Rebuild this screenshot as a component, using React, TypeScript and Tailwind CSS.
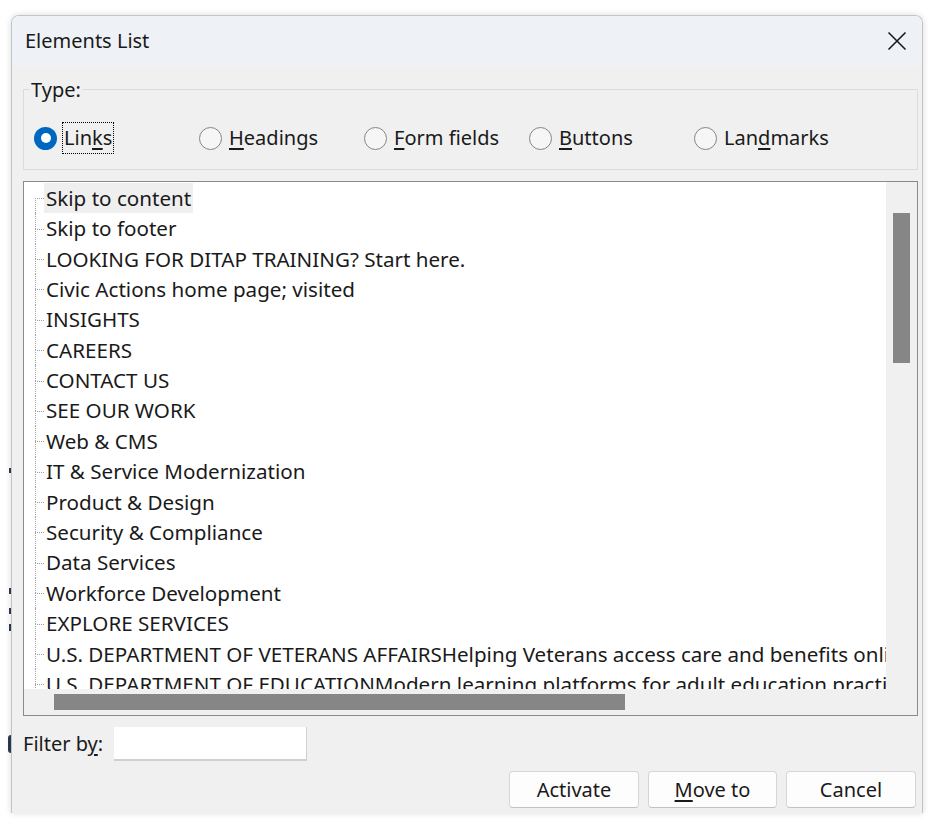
import React from 'react';

const items = [
  'Skip to content',
  'Skip to footer',
  'LOOKING FOR DITAP TRAINING? Start here.',
  'Civic Actions home page; visited',
  'INSIGHTS',
  'CAREERS',
  'CONTACT US',
  'SEE OUR WORK',
  'Web & CMS',
  'IT & Service Modernization',
  'Product & Design',
  'Security & Compliance',
  'Data Services',
  'Workforce Development',
  'EXPLORE SERVICES',
  'U.S. DEPARTMENT OF VETERANS AFFAIRSHelping Veterans access care and benefits online',
  'U.S. DEPARTMENT OF EDUCATIONModern learning platforms for adult education practitioners',
];

const Radio = ({
  checked,
  focused,
  children,
}: {
  checked?: boolean;
  focused?: boolean;
  children: React.ReactNode;
}) => {
  return (
    <div className="flex items-center h-full">
      {checked ? (
        <div className="w-[23px] h-[23px] rounded-full bg-[#0067c0] flex items-center justify-center">
          <div className="w-[10px] h-[10px] rounded-full bg-white" />
        </div>
      ) : (
        <div className="w-[23px] h-[23px] rounded-full border border-[#858585] bg-[#f6f6f6]" />
      )}
      <div
        className={
          focused
            ? 'ml-[5px] h-full px-[1px] flex items-center border border-dotted border-black'
            : 'ml-[5px] h-full px-[1px] flex items-center border border-transparent'
        }
      >
        {children}
      </div>
    </div>
  );
};

const Row = ({ text, index }: { text: string; index: number }) => {
  return (
    <div className="flex h-[30.4px] flex-none items-stretch">
      <div className="ml-[11px] w-[9px] flex flex-col flex-none">
        <div
          className={
            index === 0
              ? 'h-1/2'
              : 'h-1/2 border-l border-dotted border-[#a0a0a0]'
          }
        />
        <div className="h-1/2 border-l border-t border-dotted border-[#a0a0a0]" />
      </div>
      <div
        className={
          index === 0
            ? 'px-[2px] bg-[#efefef] whitespace-nowrap flex items-center'
            : 'px-[2px] whitespace-nowrap flex items-center'
        }
      >
        {text}
      </div>
    </div>
  );
};

const App = () => {
  return (
    <div
      className="w-[938px] h-[824px] bg-white flex text-[#1a1a1a] text-[20px]"
      style={{ fontFamily: '"Noto Sans", "Open Sans", sans-serif' }}
    >
      {/* bits of the page behind the dialog */}
      <div className="w-[11px] flex flex-col items-end flex-none">
        <div className="mt-[468px] w-[2px] h-[5px] bg-[#2b3a55]" />
        <div className="mt-[115px] w-[2px] h-[6px] bg-[#2b3a55]" />
        <div className="mt-[14px] w-[2px] h-[6px] bg-[#2b3a55]" />
        <div className="mt-[10px] w-[2px] h-[7px] bg-[#2b3a55]" />
        <div className="mt-[104px] w-[3px] h-[18px] rounded-l-full bg-[#2b3a55]" />
      </div>

      <div className="mt-[15px] w-[912px] h-[798px] flex flex-col border-l border-t border-r border-[#c4c4c4] rounded-t-[8px] overflow-hidden shadow-[0_0_6px_rgba(0,0,0,0.15)]">
        {/* title bar */}
        <div className="h-[50px] bg-[#eef2f7] flex items-center justify-between pl-[13px] pr-[15px] flex-none">
          <span className="text-[20px]">Elements List</span>
          <svg width="20" height="20" viewBox="0 0 20 20" fill="none">
            <path d="M1.5 1.5 L18.5 18.5 M18.5 1.5 L1.5 18.5" stroke="#1a1a1a" strokeWidth="1.6" />
          </svg>
        </div>

        {/* body */}
        <div className="flex-1 bg-[#f0f0f0] pl-[11px] pr-[4px] flex flex-col">
          {/* type group */}
          <div className="mt-[23px] h-[81px] border border-[#dcdcdc] flex flex-col flex-none">
            <div className="-mt-[13px] ml-[6px] px-[1px] w-fit bg-[#f0f0f0] leading-[26px]">
              Type:
            </div>
            <div className="mt-[19px] h-[30px] pl-[10px] grid grid-cols-[165px_165px_165px_165px_165px]">
              <Radio checked focused>
                <span>
                  Lin<u className="underline-offset-[3px]">k</u>s
                </span>
              </Radio>
              <Radio>
                <span>
                  <u className="underline-offset-[3px]">H</u>eadings
                </span>
              </Radio>
              <Radio>
                <span>
                  <u className="underline-offset-[3px]">F</u>orm fields
                </span>
              </Radio>
              <Radio>
                <span>
                  <u className="underline-offset-[3px]">B</u>uttons
                </span>
              </Radio>
              <Radio>
                <span>
                  Lan<u className="underline-offset-[3px]">d</u>marks
                </span>
              </Radio>
            </div>
          </div>

          {/* list */}
          <div className="mt-[11px] h-[535px] border border-[#8a8a8a] bg-[#f0f0f0] flex flex-col flex-none">
            <div className="flex h-[507px]">
              <div className="w-[862px] bg-white overflow-hidden pt-[1px] flex flex-col text-[20.6px]">
                {items.map((t, i) => (
                  <Row key={i} text={t} index={i} />
                ))}
              </div>
              <div className="flex-1 flex justify-center">
                <div className="mt-[31px] w-[17px] h-[150px] bg-[#868686]" />
              </div>
            </div>
            <div className="flex-1 flex items-center">
              <div className="ml-[30px] w-[571px] h-[16px] bg-[#868686]" />
            </div>
          </div>

          {/* filter */}
          <div className="mt-[11px] h-[34px] flex items-center flex-none">
            <div className="w-[91px]">
              Filter b<u className="underline-offset-[3px]">y</u>:
            </div>
            <div className="w-[193px] h-full bg-white border-r border-b-2 border-[#cfcfcf]" />
          </div>

          {/* buttons */}
          <div className="mt-[10px] h-[37px] flex justify-end gap-[9px] pr-[2px] flex-none">
            <button className="w-[130px] h-full bg-[#fdfdfd] border border-[#d6d6d6] border-b-[#c2c2c2] rounded-[4px]">
              Activate
            </button>
            <button className="w-[129px] h-full bg-[#fdfdfd] border border-[#d6d6d6] border-b-[#c2c2c2] rounded-[4px]">
              <u className="underline-offset-[3px]">M</u>ove to
            </button>
            <button className="w-[130px] h-full bg-[#fdfdfd] border border-[#d6d6d6] border-b-[#c2c2c2] rounded-[4px]">
              Cancel
            </button>
          </div>
        </div>
      </div>
    </div>
  );
};

export default App;
